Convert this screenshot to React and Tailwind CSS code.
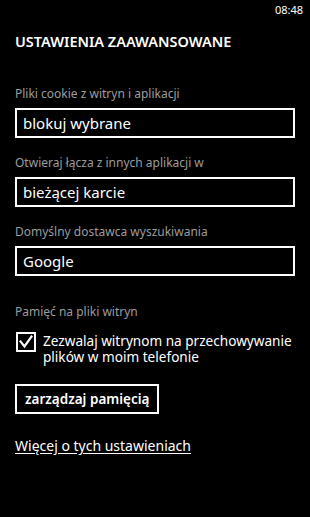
export default function App() {
  const font = { fontFamily: '"Noto Sans", "Open Sans", sans-serif' };
  return (
    <div className="w-[310px] h-[517px] bg-black text-white overflow-hidden" style={font}>
      <div className="flex justify-end pr-[7px] pt-[3px] text-[11px] leading-[14px]">08:48</div>
      <div className="px-[15px]">
        <h1 className="mt-[14px] text-[14.5px] leading-[20px] font-semibold">USTAWIENIA ZAAWANSOWANE</h1>
        <div className="mt-[35px] flex flex-col">
          <div className="text-[12px] leading-[16px] text-[#9c9c9c]">Pliki cookie z witryn i aplikacji</div>
          <div className="mt-[6px] h-[30px] border-2 border-white px-[6px] text-[15px] leading-[26px]">blokuj wybrane</div>
          <div className="mt-[17px] text-[12px] leading-[16px] text-[#9c9c9c]">Otwieraj łącza z innych aplikacji w</div>
          <div className="mt-[6px] h-[30px] border-2 border-white px-[6px] text-[15px] leading-[26px]">bieżącej karcie</div>
          <div className="mt-[17px] text-[12px] leading-[16px] text-[#9c9c9c]">Domyślny dostawca wyszukiwania</div>
          <div className="mt-[6px] h-[30px] border-2 border-white px-[6px] text-[15px] leading-[26px]">Google</div>
          <div className="mt-[28px] text-[12px] leading-[16px] text-[#9c9c9c]">Pamięć na pliki witryn</div>
          <div className="mt-[12px] flex items-start gap-[7px]">
            <div className="ml-[1px] w-[20px] h-[20px] border-2 border-white shrink-0">
              <svg width="16" height="16" viewBox="0 0 16 16" className="block">
                <path d="M2.5 7.5 L6.5 12.5 L13.5 2.5" stroke="white" strokeWidth="2.2" fill="none" strokeLinecap="square" />
              </svg>
            </div>
            <div className="mt-[1px] text-[13.6px] leading-[16px] whitespace-nowrap">
              Zezwalaj witrynom na przechowywanie
              <br />
              plików w moim telefonie
            </div>
          </div>
          <div className="mt-[19px] self-start h-[30px] border-2 border-white px-[8px] text-[13.5px] leading-[26px] font-semibold">zarządzaj pamięcią</div>
          <div className="mt-[23px] self-start text-[14px] leading-[18px] underline underline-offset-[2px]">Więcej o tych ustawieniach</div>
        </div>
      </div>
    </div>
  );
}
